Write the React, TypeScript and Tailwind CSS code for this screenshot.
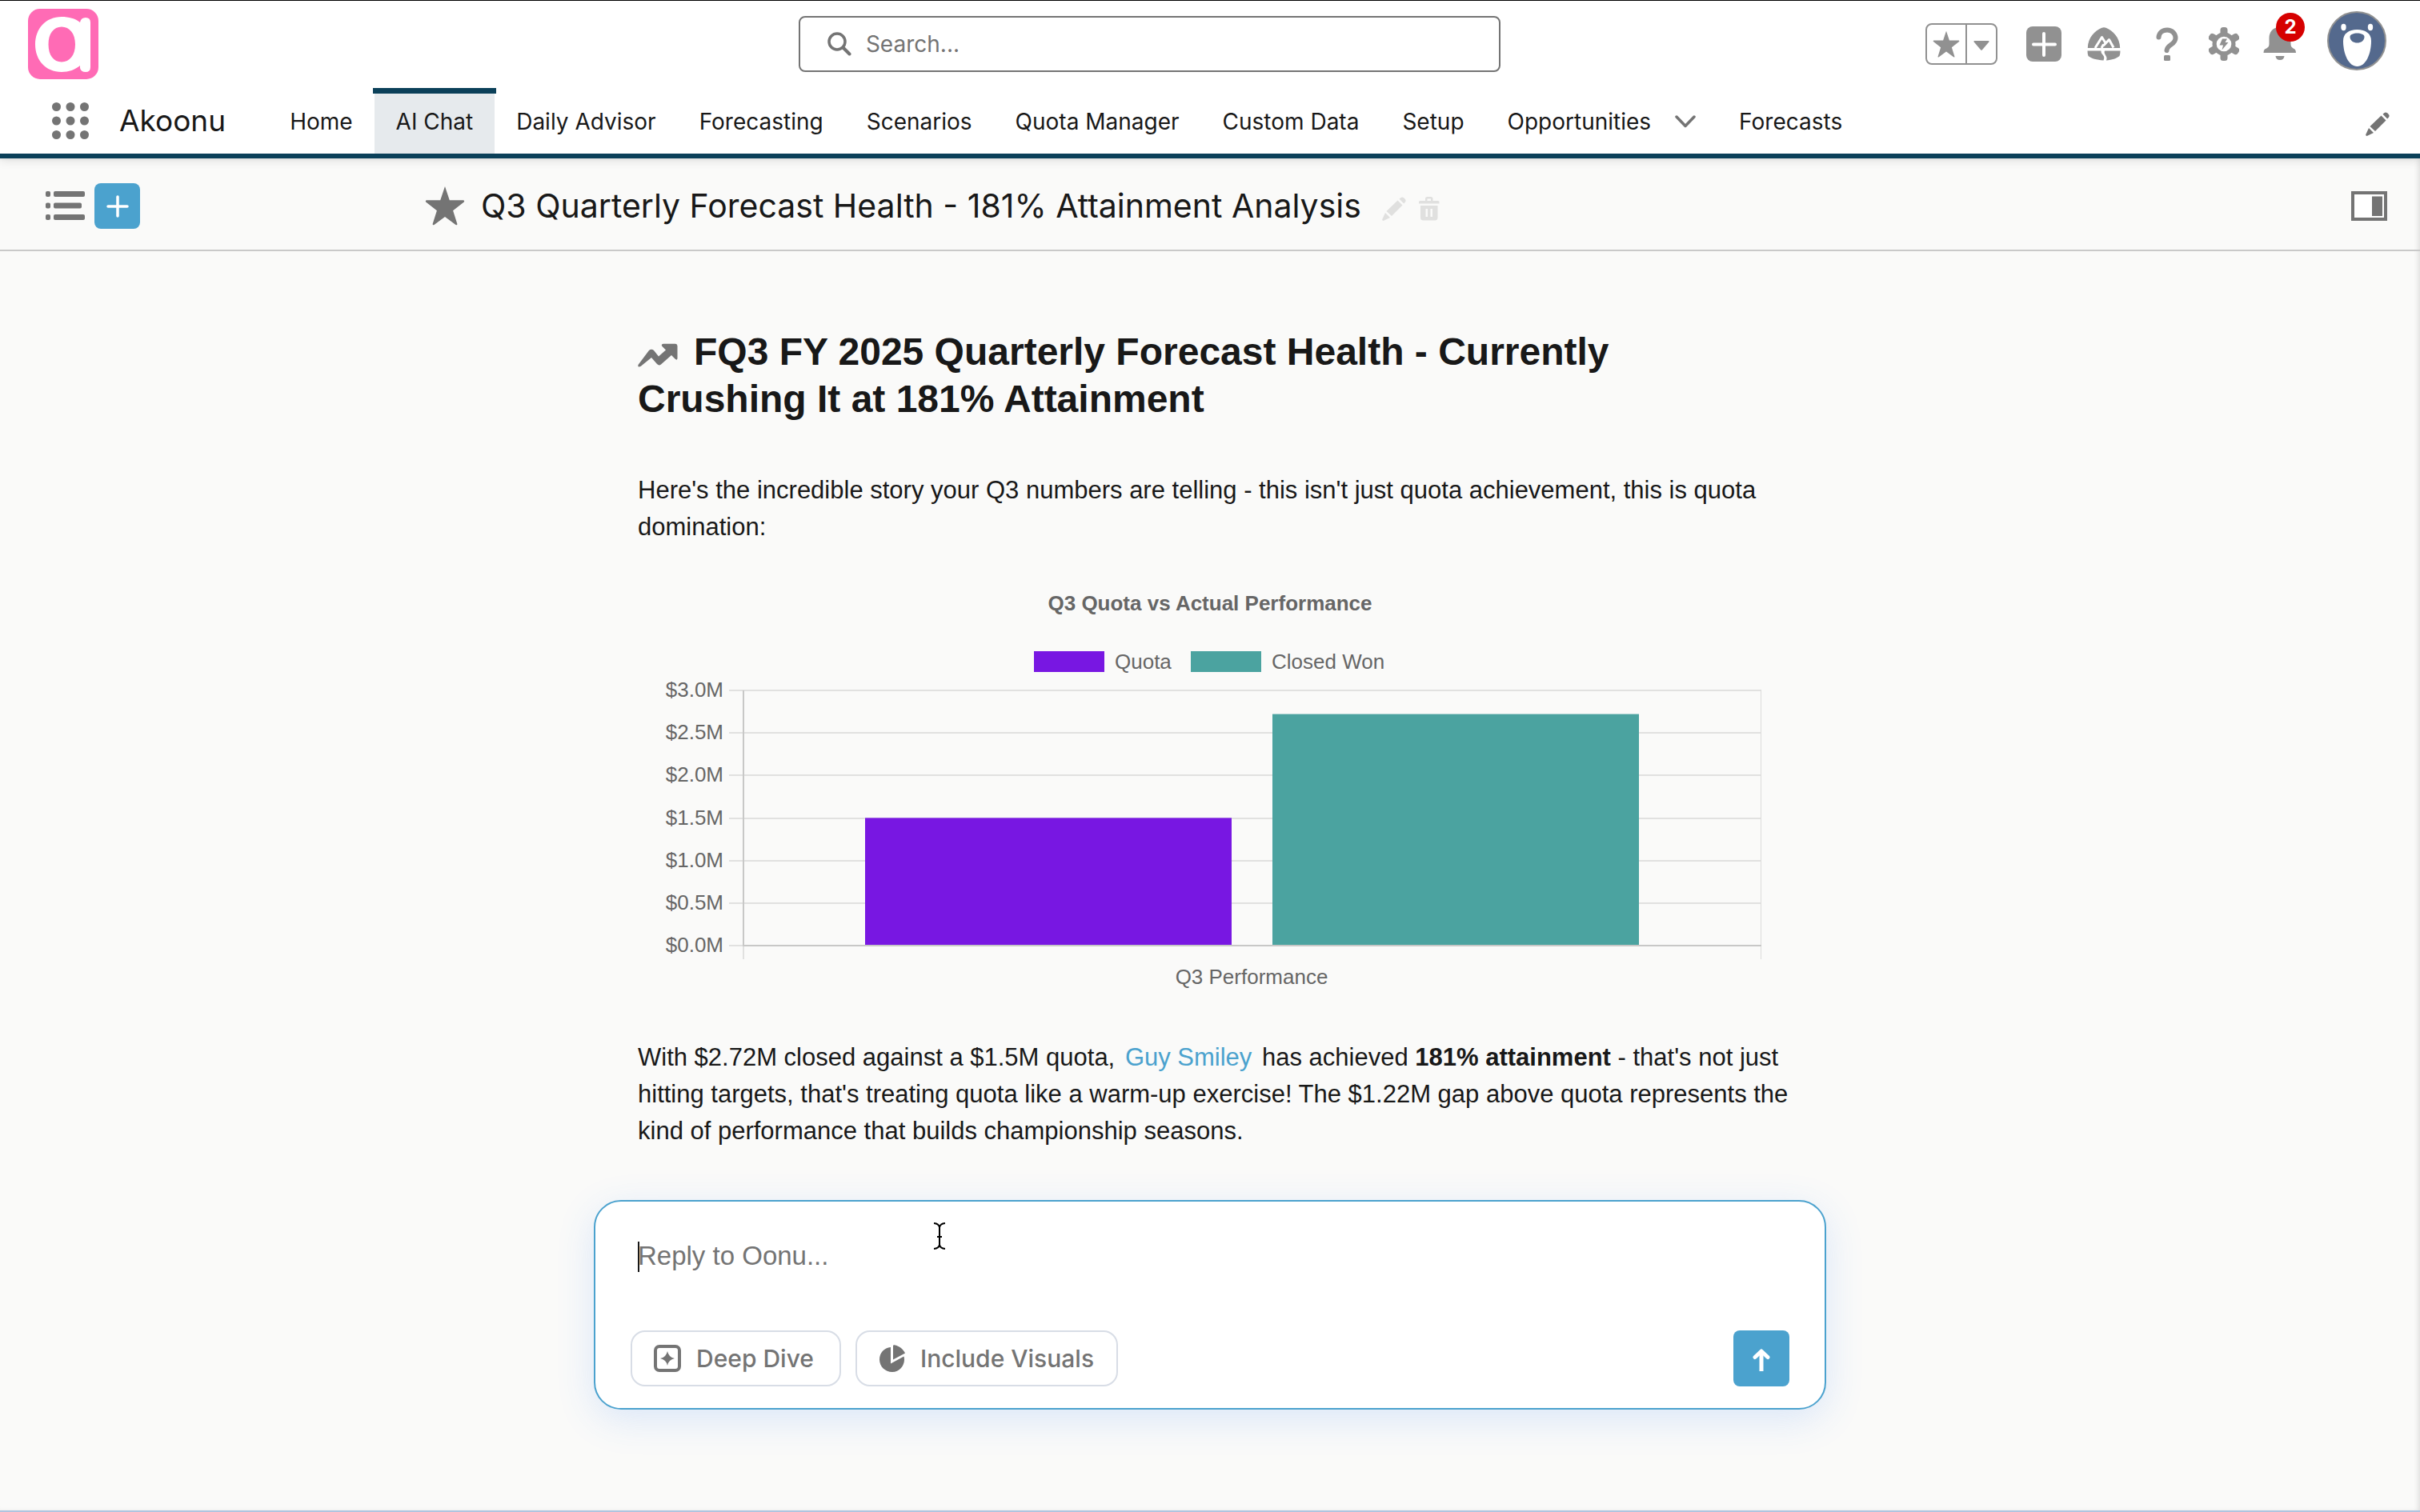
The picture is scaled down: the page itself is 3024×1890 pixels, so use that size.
import React from "react";

const SANS = "font-['Liberation_Sans',Arial,sans-serif]";

const tabs = [
  { label: "Home" },
  { label: "AI Chat", active: true },
  { label: "Daily Advisor" },
  { label: "Forecasting" },
  { label: "Scenarios" },
  { label: "Quota Manager" },
  { label: "Custom Data" },
  { label: "Setup" },
  { label: "Opportunities", menu: true },
  { label: "Forecasts" },
];

const ticks = ["$3.0M", "$2.5M", "$2.0M", "$1.5M", "$1.0M", "$0.5M", "$0.0M"];
const TICK_GAP = 53.2;

const bars = [
  { label: "Quota", value: 1.5, x: 284, color: "#7817e2" },
  { label: "Closed Won", value: 2.72, x: 793, color: "#4ba3a0" },
];

const Star = ({ className }: { className: string }) => (
  <svg viewBox="0 0 52 52" className={className} fill="currentColor">
    <path d="M26 1 L32 19 H50 Q52 20 50.5 21.5 L36.5 32.5 L42 50 Q42 52 40 51 L26 40.5 L12 51 Q10 52 10 50 L15.5 32.5 L1.5 21.5 Q0 20 2 19 H20 L26 1 Z" />
  </svg>
);

const Pencil = ({ className }: { className: string }) => (
  <svg viewBox="0 0 30 30" className={className} fill="currentColor">
    <path d="M19.5 4.5 L25.5 10.5 L12 24 L5.5 18 Z" />
    <path d="M21.5 2.8 L23.5 1 Q25.2 -.3 27 1.2 L28.8 3 Q30.3 4.6 29 6.4 L27.2 8.4 Z" />
    <path d="M4 20 L10 26 L2.2 29.8 Q0 30.4 .3 28 Z" />
  </svg>
);

const Logo = () => (
  <svg viewBox="0 0 88 88" className="size-22">
    <rect width="88" height="88" rx="15" fill="#ff6bb5" />
    <path
      d="M42 10 C22 10 9 25 9 44.5 C9 64 22 79 42 79 C51 79 59 76 65 71 V74 Q66 79 72 79 Q78 79 78 73 V17 Q78 11 72 11 Q66 11 65 17 C59 12 51 10 42 10 Z M42 22.5 C52 22.5 59 31 59 44.5 C59 58 52 66.5 42 66.5 C32 66.5 25.5 58 25.5 44.5 C25.5 31 32 22.5 42 22.5 Z"
      fill="#fff"
      fillRule="evenodd"
    />
  </svg>
);

const HeaderActions = () => (
  <div className="flex items-center justify-end pr-[42px] text-[#919191]">
    <div className="mr-9 flex h-[52px] w-[90px] rounded-lg border-2 border-[#919191]">
      <button aria-label="Favorites" className="flex w-[50px] items-center justify-center border-r-2 border-[#919191]">
        <Star className="size-[34px]" />
      </button>
      <button aria-label="Favorites list" className="flex flex-1 items-center justify-center">
        <svg viewBox="0 0 20 12" className="mt-1 w-5" fill="currentColor">
          <path d="M1.2 0 H18.8 Q20 .4 19.3 1.5 L11 11.3 Q10 12.3 9 11.3 L.7 1.5 Q0 .4 1.2 0 Z" />
        </svg>
      </button>
    </div>
    <button aria-label="Global actions" className="mr-8">
      <svg viewBox="0 0 44 44" className="size-11">
        <rect width="44" height="44" rx="8" fill="currentColor" />
        <path d="M22 9 V36 M9 22.5 H36" stroke="#fff" strokeWidth="4" strokeLinecap="round" />
      </svg>
    </button>
    <button aria-label="Guidance Center" className="mr-[44px]">
      <svg viewBox="0 0 42 42" className="size-[42px]">
        <path d="M.8 26 C1 13 10 4 18.5 .8 Q21 -.2 23.5 .8 C32 4 41 13 41.2 26 Z" fill="currentColor" />
        <path d="M10 26 L18.5 12.5 L23.5 20.5 M18 26 L20.5 21.5 M20.5 23 L27.5 15.5 L33 25.5" fill="none" stroke="#fff" strokeWidth="3" strokeLinejoin="round" />
        <path d="M.5 29.5 H17.5 C17 35 23.5 34.5 20.5 41.5 C12 41 5 39 1.5 36 Q.5 34 .5 29.5 Z" fill="currentColor" />
        <path d="M22 29.5 H41.5 Q41.5 34 40.5 36 C37 39 31 41 24 41.5 C26.5 36 20 34 22 29.5 Z" fill="currentColor" />
      </svg>
    </button>
    <button aria-label="Help" className="mr-[38px]">
      <svg viewBox="0 0 28 42" className="w-7" fill="none">
        <path d="M3.5 12.5 C4 6.5 8.5 3.5 14 3.5 C20 3.5 24.5 8 24.5 13.5 C24.5 22 14 21.5 13.5 29" stroke="currentColor" strokeWidth="6" strokeLinecap="round" />
        <rect x="10" y="35" width="8" height="7" rx="1.5" fill="currentColor" />
      </svg>
    </button>
    <button aria-label="Setup menu" className="mr-[30px]">
      <svg viewBox="0 0 38 42" className="w-[38px]">
        <g fill="currentColor">
          <circle cx="19" cy="21" r="14.5" />
          <rect x="14.5" y="0" width="9" height="42" rx="3.5" />
          <rect x="14.5" y="0" width="9" height="42" rx="3.5" transform="rotate(60 19 21)" />
          <rect x="14.5" y="0" width="9" height="42" rx="3.5" transform="rotate(120 19 21)" />
        </g>
        <circle cx="19" cy="21" r="9.3" fill="#fff" />
        <path d="M17 14.5 H23 L20.5 19 H24.5 L16.5 28.5 L18 22.5 H13.5 Z" fill="currentColor" />
      </svg>
    </button>
    <button aria-label="Notifications" className="relative mr-[38px]">
      <svg viewBox="0 0 42 42" className="size-[42px]" fill="currentColor">
        <path d="M21 0 C12 0 7.5 6 7.5 14 V21 C7.5 25 5 26 2 27.5 Q.5 28.5 .5 32 H41 Q41 28.5 39.5 27.5 C37 26 34.5 25 34.5 21 V14 C34.5 6 30 0 21 0 Z" />
        <path d="M15.5 36 H26.5 Q26 41 21 41 Q16 41 15.5 36 Z" />
      </svg>
      <span className="absolute -top-[18px] left-4 flex size-9 items-center justify-center rounded-full bg-[#d60000] text-2xl font-bold text-white">
        2
      </span>
    </button>
    <button aria-label="View profile" className="-mt-2">
      <svg viewBox="0 0 74 74" className="size-[74px]">
        <circle cx="37" cy="37" r="36" fill="#54698d" stroke="#919191" strokeWidth="2" />
        <ellipse cx="20.5" cy="20" rx="3.2" ry="4.2" fill="#fff" />
        <ellipse cx="54" cy="20" rx="3.2" ry="4.2" fill="#fff" />
        <path d="M37.5 23 C27 23 20 28 20 37 C20 54 27 69 37.5 69 C48 69 55 54 55 37 C55 28 48 23 37.5 23 Z" fill="#fff" />
        <path d="M28.5 32 C28.5 26 46.5 26 46.5 32 C46.5 42 28.5 42 28.5 32 Z" fill="#54698d" />
      </svg>
    </button>
  </div>
);

const GlobalHeader = () => (
  <header className="relative z-10 border-b-6 border-[#0b4059] bg-white shadow-[0_2px_12px_rgba(0,0,0,0.12)]">
    <div className="grid h-[109px] grid-cols-[33fr_29fr_38fr] items-center pb-0.5">
      <div className="pl-[35px]">
        <Logo />
      </div>
      <label className="flex h-[70px] items-center gap-[18px] rounded-lg border-2 border-[#747474] pl-[34px] text-[#747474]">
        <svg viewBox="0 0 30 30" className="size-[30px]" fill="none" stroke="currentColor" strokeLinecap="round">
          <circle cx="12" cy="12" r="10" strokeWidth="3.5" />
          <path d="M19.5 19.5 L27.5 27.5" strokeWidth="4" />
        </svg>
        <input type="search" placeholder="Search..." aria-label="Search" className="flex-1 text-[28px] outline-none placeholder:text-[#747474]" />
      </label>
      <HeaderActions />
    </div>
    <nav className="flex h-[82px] items-stretch text-[#181818]">
      <button aria-label="App Launcher" className="ml-[65px] self-center">
        <svg viewBox="0 0 46 46" className="size-[46px]" fill="#747474">
          {[5.5, 23, 40.5].map((y) => [5.5, 23, 40.5].map((x) => <circle key={x + y * 100} cx={x} cy={y} r="5.5" />))}
        </svg>
      </button>
      <span className="mr-[53px] ml-[38px] self-center text-[37px]">Akoonu</span>
      {tabs.map((tab) => (
        <a
          key={tab.label}
          href="#"
          className={`flex items-center px-[27px] pt-0.5 text-[28px] whitespace-nowrap ${
            tab.active ? "relative bg-[#e6eaed] before:absolute before:-inset-x-0.5 before:top-0 before:h-[7px] before:bg-[#0b4059]" : ""
          }`}
        >
          {tab.label}
          {tab.menu && (
            <svg viewBox="0 0 26 16" className="ml-[30px] w-[26px]" fill="none" stroke="#747474" strokeWidth="3.5" strokeLinecap="round" strokeLinejoin="round">
              <path d="M2 2 L13 13.5 L24 2" />
            </svg>
          )}
        </a>
      ))}
      <button aria-label="Edit navigation" className="mt-2 mr-[38px] ml-auto text-[#747474]">
        <Pencil className="size-[30px]" />
      </button>
    </nav>
  </header>
);

const ChatToolbar = () => (
  <div className="flex h-[116px] items-center border-b-2 border-[#c9c9c9] pt-1 pr-[41px] pl-[57px] text-[#747474]">
    <div className="flex w-[474px] items-center gap-3">
      <button aria-label="Chat list">
        <svg viewBox="0 0 49 36" className="w-[49px]" fill="currentColor">
          <rect x="0" y="0" width="6" height="7" rx="2" />
          <rect x="10" y="0" width="39" height="7" rx="2" />
          <rect x="0" y="14.5" width="6" height="7" rx="2" />
          <rect x="10" y="14.5" width="35" height="7" rx="2" />
          <rect x="0" y="29" width="6" height="7" rx="2" />
          <rect x="10" y="29" width="39" height="7" rx="2" />
        </svg>
      </button>
      <button aria-label="New chat" className="flex size-[57px] items-center justify-center rounded-lg bg-[#4ba2ce]">
        <svg viewBox="0 0 28 28" className="mt-0.5 size-7">
          <path d="M14 2 V26 M2 14 H26" stroke="#fff" strokeWidth="3.5" strokeLinecap="round" />
        </svg>
      </button>
    </div>
    <Star className="size-[50px]" />
    <h1 className="ml-5 pt-0.5 text-[41px] whitespace-nowrap text-[#181818]">Q3 Quarterly Forecast Health - 181% Attainment Analysis</h1>
    <button aria-label="Rename chat" className="mt-2 ml-[26px] text-[#e0e0df]">
      <Pencil className="size-[30px]" />
    </button>
    <button aria-label="Delete chat" className="mt-2 ml-4 text-[#e0e0df]">
      <svg viewBox="0 0 26 30" className="w-[26px]" fill="currentColor" fillRule="evenodd">
        <path d="M1.5 5 H8 V2.5 Q8 0 10.5 0 H15 Q17.5 0 17.5 2.5 V5 H24 Q25.5 5 25.5 6.5 V8.5 H0 V6.5 Q0 5 1.5 5 Z M10.5 5 H15 V2.5 H10.5 Z" />
        <path d="M2 11 H23.5 V26 Q23.5 29.5 20 29.5 H5.5 Q2 29.5 2 26 Z M8.5 15 V25 H11 V15 Z M14.5 15 V25 H17 V15 Z" />
      </svg>
    </button>
    <button aria-label="Toggle side panel" className="ml-auto">
      <svg viewBox="0 0 45 37" className="w-[45px]">
        <rect x="2" y="2" width="41" height="33" fill="#fff" stroke="currentColor" strokeWidth="4" />
        <rect x="26" y="6.5" width="13" height="24.5" fill="currentColor" />
      </svg>
    </button>
  </div>
);

const QuotaChart = () => (
  <svg viewBox="0 0 1430 520" className={`${SANS} w-full text-[26px]`} fill="#666" role="img" aria-label="Q3 Quota vs Actual Performance">
    <text x="715" y="28" textAnchor="middle" fontWeight="bold">
      Q3 Quota vs Actual Performance
    </text>
    <rect x="495" y="79" width="88" height="26" fill="#7817e2" />
    <text x="596" y="101">Quota</text>
    <rect x="691" y="79" width="88" height="26" fill="#4ba3a0" />
    <text x="792" y="101">Closed Won</text>
    {ticks.map((tick, i) => (
      <g key={tick}>
        <rect x="114" y={Math.round(127 + i * TICK_GAP)} width="1290" height="2" fill="#e1e1e0" />
        <text x="107" y={Math.round(136 + i * TICK_GAP)} textAnchor="end">
          {tick}
        </text>
      </g>
    ))}
    <rect x="131" y="128" width="2" height="319" fill="#c8c8c7" />
    <rect x="131" y="447" width="2" height="17" fill="#e1e1e0" />
    <rect x="1403" y="127" width="1" height="337" fill="#dcdcdb" />
    <rect x="131" y="446" width="1273" height="2" fill="#c8c8c7" />
    {bars.map((bar) => (
      <rect key={bar.label} x={bar.x} y={447 - bar.value * 2 * TICK_GAP} width="458" height={bar.value * 2 * TICK_GAP - 1} fill={bar.color} />
    ))}
    <text x="767" y="495" textAnchor="middle">
      Q3 Performance
    </text>
  </svg>
);

const Answer = () => (
  <article className={`${SANS} pt-24 pr-[45px] pl-[55px] text-[31px] leading-[46px] text-[#181818]`}>
    <h2 className="pr-10 text-[48px] leading-[59px] font-bold">
      <svg viewBox="0 0 50 30" className="mr-5 inline-block w-[50px] align-[-3px]" fill="#747474">
        <path d="M.5 27 L14 9 Q17 6.5 20 9 L26 16.5 L35 8.5 L30.5 4 Q28.5 1 32 .8 H47 Q49.5 1 49.5 3.5 V19 Q49 22 46.5 19.5 L42 15 L29 26.5 Q26.5 28.5 24 26 L17 18 L3.5 29 Q-.5 30.5 .5 27 Z" />
      </svg>
      FQ3 FY 2025 Quarterly Forecast Health - Currently Crushing It at 181% Attainment
    </h2>
    <p className="mt-[62px]">
      Here's the incredible story your Q3 numbers are telling - this isn't just quota achievement, this is quota domination:
    </p>
    <div className="mt-[53px] mr-2.5 mb-11">
      <QuotaChart />
    </div>
    <p>
      With $2.72M closed against a $1.5M quota,{" "}
      <a href="#" className="px-1 text-[#4ba2ce]">
        Guy Smiley
      </a>{" "}
      has achieved <strong>181% attainment</strong> - that's not just hitting targets, that's treating quota like a warm-up exercise! The
      $1.22M gap above quota represents the kind of performance that builds championship seasons.
    </p>
  </article>
);

const Composer = () => (
  <form className="relative mt-auto mb-[126px] flex h-[262px] flex-col rounded-[34px] border-2 border-[#4ba2ce] bg-white shadow-[0_12px_48px_rgba(59,130,246,0.16)]">
    <textarea
      aria-label="Reply to Oonu"
      placeholder="Reply to Oonu..."
      className={`${SANS} mx-[53px] mt-[45px] h-16 resize-none text-[33px] leading-[46px] outline-none placeholder:text-[#747474]`}
    />
    <span className="absolute top-[50px] left-[53px] h-[38px] w-0.5 bg-[#181818]" />
    <svg viewBox="0 0 16 34" className="absolute top-[26px] left-[422px] w-4" fill="none" stroke="#000" strokeWidth="2">
      <path d="M1 1 Q7 1.5 8 6 Q9 1.5 15 1 M1 33 Q7 32.5 8 28 Q9 32.5 15 33 M8 5 V29 M5 18 H11" />
    </svg>
    <div className="mt-auto mr-11 mb-[27px] ml-11 flex h-[70px] gap-[18px] text-[30px] font-medium text-[#747474]">
      <button type="button" className="flex items-center gap-[19px] rounded-[18px] border-2 border-[#d8dde6] pr-8 pl-[27px]">
        <svg viewBox="0 0 34 34" className="size-[34px]">
          <rect x="2" y="2" width="30" height="30" rx="5" fill="none" stroke="currentColor" strokeWidth="4" />
          <path d="M17 8 Q18.5 15.5 26 17 Q18.5 18.5 17 26 Q15.5 18.5 8 17 Q15.5 15.5 17 8 Z" fill="currentColor" />
        </svg>
        Deep Dive
      </button>
      <button type="button" className="flex items-center gap-[19px] rounded-[18px] border-2 border-[#d8dde6] px-7">
        <svg viewBox="0 0 32 34" className="h-[34px]" fill="currentColor">
          <path d="M14 3 V23.5 L30.5 14.5 C33 24 26 34 16 34 C7 34 0 27 0 18.5 C0 10 6 3.5 14 3 Z" />
          <path d="M17 1.5 Q17 0 18.5 .3 C25 1.5 30 6 32 10.5 L17 18.5 Z" />
        </svg>
        Include Visuals
      </button>
      <button type="submit" aria-label="Send" className="ml-auto flex size-[70px] items-center justify-center rounded-lg bg-[#4ba2ce]">
        <svg viewBox="0 0 22 28" className="mt-1 w-[22px]" fill="none" stroke="#fff" strokeWidth="5" strokeLinejoin="round">
          <path d="M11 28 V4" />
          <path d="M3 10.5 L11 3 L19 10.5" strokeLinecap="round" />
        </svg>
      </button>
    </div>
  </form>
);

export default function App() {
  return (
    <div className="flex min-h-screen flex-col border-t border-b-2 border-t-black border-b-[#b0c4df] bg-[#fafaf9] font-['Inter',sans-serif]">
      <GlobalHeader />
      <div className="flex flex-1 flex-col shadow-[inset_-4px_0_6px_-2px_rgba(0,0,0,0.12)]">
        <ChatToolbar />
        <main className="mx-auto flex w-full max-w-[1540px] flex-1 flex-col">
          <Answer />
          <Composer />
        </main>
      </div>
    </div>
  );
}
